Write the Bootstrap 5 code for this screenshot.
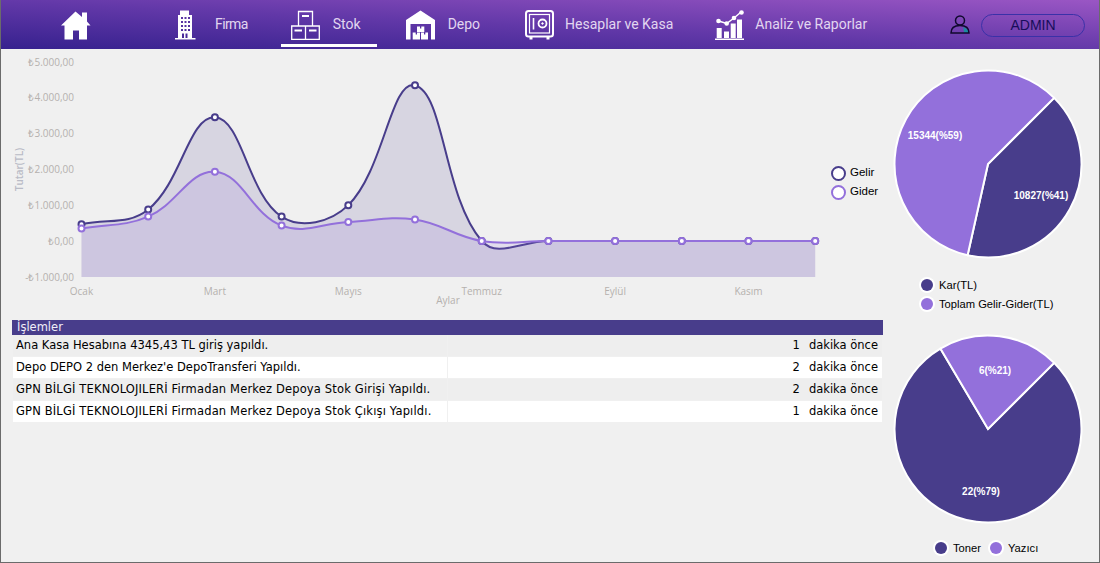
<!DOCTYPE html>
<html>
<head>
  <meta charset="UTF-8">
  <title>Panel</title>
  <link href="https://cdn.jsdelivr.net/npm/bootstrap@5.3.0/dist/css/bootstrap.min.css" rel="stylesheet">
  <style>
    html, body { height: 563px; overflow: hidden; }
    body { background: #f0f0f0; font-family: "Liberation Sans", Arial, sans-serif; font-size: 11.2px; color: #000; }
    .app-frame { height: 563px; border: 1px solid #6b6b6b; border-top: 0; display: flex; flex-direction: column; }
    .top-bar { height: 49px; background: linear-gradient(to top right, #36218e 0%, #6238a8 48%, #9a56c4 100%); flex: none; padding-left: 50px; }
    .top-link { height: 47px; align-self: flex-start; display: flex; align-items: center; gap: 13px; padding: 4px 16px 0 10px; color: #e2d6f0; font-family: Roboto, sans-serif; font-size: 14px; text-decoration: none; border-bottom: 3px solid transparent; }
    .top-link:hover { color: #e2d6f0; }
    .top-link.is-on { border-bottom-color: #fff; }
    .top-link svg { display: block; margin-top: 1px; }
    .link-firma { margin-left: 54px; gap: 15px; letter-spacing: -.6px; }
    .link-stok { margin-left: 17px; }
    .link-depo, .link-kasa { margin-left: 19px; }
    .link-kasa, .link-rapor { gap: 11px; }
    .link-rapor { margin-left: 16px; }
    .user-pill { width: 104px; height: 23px; margin: 1px 14px 0 11px; border: 1px solid #3a31a8; border-radius: 12px; color: #170d5a; font-size: 14px; line-height: 21px; text-align: center; }
    .main-col { width: 884px; flex: none; }
    .side-col { width: 214px; flex: none; }
    .chart-wrap { height: 271px; }
    .chart-key { margin: 114.5px 0 0 3px; font-size: 11.5px; }
    .chart-key > div { height: 19px; }
    .log-table { width: 871px; margin: 0 0 0 11px; border-collapse: separate; border-spacing: 1px; font-family: "DejaVu Sans", Verdana, sans-serif; font-size: 11.5px; table-layout: fixed; }
    .log-table th { background: #483d8b; color: #f0eef8; font-weight: 400; height: 13px; line-height: 13px; padding: 0 4px; box-shadow: 0 0 0 1px #483d8b; }
    .log-table td { height: 21px; padding: 0 4px 0 3px; background: #eeeeee; vertical-align: middle; white-space: nowrap; }
    .log-table tr:nth-child(even) td { background: #fff; }
    .log-wide { letter-spacing: .16px; }
    .log-num { display: inline-block; margin-right: 9px; }
    .pie-label { font: 700 10px "Liberation Sans", Arial, sans-serif; fill: #fff; text-anchor: middle; }
    .axis-text { font: 10px "Open Sans", sans-serif; fill: #b5b1ae; }
    .axis-title { font-weight: 600; fill: #b9bbc6; }
    .pie-svg { display: block; margin-left: 5px; }
    .pie-top { margin-top: 17px; }
    .pie-bottom { margin-top: 17px; }
    .pie-key { margin: 13.5px 0 0 36px; }
    .pie-key > div { height: 19px; gap: 6px; }
    .pie-key-row { margin: 12px 0 0 50px; height: 19px; gap: 6px; }
    .dot-key { width: 12px; height: 12px; border-radius: 50%; flex: none; box-shadow: 0 0 0 2px #fff; }
    .dot-dark { background: #483d8b; }
    .dot-light { background: #9370db; }
    .dot-next { margin-left: 3px; }
    .ring-key { width: 15px; height: 15px; border-radius: 50%; background: #fff; border: 2px solid #483d8b; flex: none; }
    .ring-light { border-color: #9370db; }
  </style>
</head>
<body>
<div class="app-frame">
  <nav class="top-bar d-flex align-items-center">
    <a class="top-link" href="#">
      <svg width="30" height="30" viewBox="0 -1.500 30 30" fill="#fff"><path d="M14.500 0 21 5.500V1h5v9l3.500 4H26v14h-8v-9h-6v9H3.500V14H0z"/></svg>
    </a>
    <a class="top-link link-firma" href="#">
      <svg width="29" height="30" viewBox="0 0 29 30" fill="#fff"><path fill-rule="evenodd" d="M7 28V5h2V.5h9V5h3v23h3.500v1.500H4V28zM10 7v2h2V7zm3.500 0v2h2V7zM17 7v2h2V7zm-7 4v2h2v-2zm3.500 0v2h2v-2zm3.500 0v2h2v-2zm-7 4v2h2v-2zm3.500 0v2h2v-2zm3.500 0v2h2v-2zm-7 4v2h2v-2zm3.500 0v2h2v-2zm3.500 0v2h2v-2zm-6 4.500V28h2v-4.500zm3.500 0V28h2v-4.500z"/></svg>
      Firma
    </a>
    <a class="top-link link-stok is-on" href="#">
      <svg width="29" height="30" viewBox="0 0 29 30" fill="none" stroke="#fff" stroke-width="1.300"><path d="M7.500 1.500h14V16h-14zM.7 16h13.800v13.300H.7zM14.500 16h13.800v13.300H14.500z"/><path d="M11 6h7M3.500 20.500h7.500M18 20.500h7.500" stroke-width="1.800"/></svg>
      Stok
    </a>
    <a class="top-link link-depo" href="#">
      <svg width="29" height="30" viewBox="0 0 29 30" fill="#fff"><path fill-rule="evenodd" d="M14.500.5 29 10v19.500h-4V14H4.500v15.500H0V10z"/><path d="M11 16.500h3v2h1.300v-2h3v5.500H11zM6.700 22.500h3v2H11v-2h3v7H6.700zM15 22.500h3v2h1.300v-2H22v7h-7z"/></svg>
      Depo
    </a>
    <a class="top-link link-kasa" href="#">
      <svg width="29" height="30" viewBox="0 0 29 30" fill="none" stroke="#fff"><rect x="1" y="1" width="27" height="25.500" rx="2.500" stroke-width="2"/><rect x="4.500" y="4.500" width="20" height="18.500" stroke-width="1.200"/><path d="M8.500 8v11.500" stroke-width="1.600"/><circle cx="17.500" cy="13.500" r="4" stroke-width="1.800"/><circle cx="17.500" cy="13.500" r=".8" fill="#fff"/><path d="M6 27v2.500M23 27v2.500" stroke-width="3"/></svg>
      Hesaplar ve Kasa
    </a>
    <a class="top-link link-rapor" href="#">
      <svg width="29" height="30" viewBox="0 0 29 30" fill="#fff"><path d="M0 28.500h29V30H0zM1.700 18h5v10h-5zM9 21.500h5V28H9zM15.700 13.500h5V28h-5zM22 9.500h5V28h-5z"/><path d="M3.500 11l8.200 2.500L19 8l7.700-6.500" fill="none" stroke="#fff" stroke-width="1.500"/><circle cx="3.500" cy="11" r="2.300"/><circle cx="11.700" cy="13.500" r="2.300"/><circle cx="19" cy="8" r="2.300"/><circle cx="26.500" cy="2.500" r="2.300"/></svg>
      Analiz ve Raporlar
    </a>
    <svg class="ms-auto" width="20" height="19" viewBox="0 0 20 19" fill="none" stroke="#10092e" stroke-width="1.500"><path d="M13 12c3.500 1 5.500 3 6 6h-5c0-2-.2-4-1-6z" fill="#1c8aa0" stroke="none"/><circle cx="10" cy="5.500" r="4.500"/><path d="M1 18c0-5 3.500-7.500 9-7.500s9 2.500 9 7.500z"/></svg>
    <div class="user-pill">ADMIN</div>
  </nav>

  <div class="d-flex flex-grow-1">
    <div class="main-col">
      <div class="chart-wrap d-flex">
        <svg id="line-chart" width="827" height="271" viewBox="1 49 827 271"></svg>
        <div class="chart-key">
          <div class="d-flex align-items-center gap-1"><span class="ring-key"></span>Gelir</div>
          <div class="d-flex align-items-center gap-1"><span class="ring-key ring-light"></span>Gider</div>
        </div>
      </div>
      <table class="log-table">
        <colgroup><col><col></colgroup>
        <thead><tr><th colspan="2">İşlemler</th></tr></thead>
        <tbody id="log-rows"></tbody>
      </table>
    </div>

    <div class="side-col">
      <svg id="pie-a" class="pie-svg pie-top" width="196" height="196" viewBox="-98 -98 196 196"></svg>
      <div class="pie-key">
        <div class="d-flex align-items-center"><span class="dot-key dot-dark"></span>Kar(TL)</div>
        <div class="d-flex align-items-center"><span class="dot-key dot-light"></span>Toplam Gelir-Gider(TL)</div>
      </div>
      <svg id="pie-b" class="pie-svg pie-bottom" width="196" height="196" viewBox="-98 -98 196 196"></svg>
      <div class="pie-key-row d-flex align-items-center">
        <span class="dot-key dot-dark"></span>Toner
        <span class="dot-key dot-light dot-next"></span>Yazıcı
      </div>
    </div>
  </div>
</div>

<script src="https://cdn.jsdelivr.net/npm/bootstrap@5.3.0/dist/js/bootstrap.bundle.min.js"></script>
<script>
  // islemler tablosu
  const logs = [
    ['Ana Kasa Hesabına 4345,43 TL giriş yapıldı.', 1, ''],
    ["Depo DEPO 2 den Merkez'e DepoTransferi Yapıldı.", 2, ''],
    ['GPN BİLGİ TEKNOLOJILERİ Firmadan Merkez Depoya Stok Girişi Yapıldı.', 2, 'log-wide'],
    ['GPN BİLGİ TEKNOLOJILERİ Firmadan Merkez Depoya Stok Çıkışı Yapıldı.', 1, 'log-wide']
  ];
  document.getElementById('log-rows').innerHTML = logs.map(l =>
    `<tr><td class="${l[2]}">${l[0]}</td><td class="text-end"><span class="log-num">${l[1]}</span>dakika önce</td></tr>`).join('');

  // cizgi grafik
  const SVG_X0 = 81.5, STEP = 66.7, Y0 = 241, UNIT = 35.85;
  const gelir = [470, 880, 3450, 680, 1000, 4345, 0, 0, 0, 0, 0, 0];
  const gider = [350, 680, 1930, 430, 530, 600, 0, 0, 0, 0, 0, 0];
  const toXY = arr => arr.map((v, i) => [SVG_X0 + i * STEP, Y0 - v / 1000 * UNIT]);

  // chart.js tension mantigi
  function spline(pts) {
    const t = 0.4;
    let d = `M${pts[0][0]} ${pts[0][1]}`;
    const ctrl = pts.map((p, i) => {
      const a = pts[Math.max(i - 1, 0)], b = pts[Math.min(i + 1, pts.length - 1)];
      const d1 = Math.hypot(p[0] - a[0], p[1] - a[1]), d2 = Math.hypot(b[0] - p[0], b[1] - p[1]);
      const s = d1 + d2 ? d1 / (d1 + d2) : 0, f = 1 - s;
      return {
        prev: [p[0] - t * s * (b[0] - a[0]), p[1] - t * s * (b[1] - a[1])],
        next: [p[0] + t * f * (b[0] - a[0]), p[1] + t * f * (b[1] - a[1])]
      };
    });
    for (let i = 1; i < pts.length; i++) {
      d += `C${ctrl[i - 1].next[0]} ${ctrl[i - 1].next[1]} ${ctrl[i].prev[0]} ${ctrl[i].prev[1]} ${pts[i][0]} ${pts[i][1]}`;
    }
    return d;
  }

  function series(arr, color) {
    const pts = toXY(arr), line = spline(pts);
    const last = pts[pts.length - 1][0];
    let s = `<path d="${line}L${last} 277L${SVG_X0} 277Z" fill="${color}" fill-opacity=".15"/>`;
    s += `<path d="${line}" fill="none" stroke="${color}" stroke-width="2"/>`;
    s += pts.map(p => `<circle cx="${p[0]}" cy="${p[1]}" r="3" fill="#fff" stroke="${color}" stroke-width="2"/>`).join('');
    return s;
  }

  let chart = '';
  ['₺5.000,00', '₺4.000,00', '₺3.000,00', '₺2.000,00', '₺1.000,00', '₺0,00', '-₺1.000,00'].forEach((t, i) => {
    chart += `<text class="axis-text" x="74" y="${65.500 + i * 35.85}" text-anchor="end">${t}</text>`;
  });
  ['Ocak', 'Mart', 'Mayıs', 'Temmuz', 'Eylül', 'Kasım'].forEach((t, i) => {
    chart += `<text class="axis-text" x="${SVG_X0 + i * 2 * STEP}" y="295" text-anchor="middle">${t}</text>`;
  });
  chart += `<text class="axis-text" x="448" y="304" text-anchor="middle">Aylar</text>`;
  chart += `<text class="axis-text axis-title" transform="translate(23 169.500) rotate(-90)" text-anchor="middle">Tutar(TL)</text>`;
  chart += series(gelir, '#483d8b') + series(gider, '#9370db');
  document.getElementById('line-chart').innerHTML = chart;

  // pastalar, 45 dereceden baslar
  function pie(id, parts) {
    const R = 93.5;
    const pos = (deg, r) => [Math.sin(deg * Math.PI / 180) * r, -Math.cos(deg * Math.PI / 180) * r];
    let a = 45, out = '';
    parts.forEach(p => {
      const b = a + p.v / 100 * 360, s = pos(a, R), e = pos(b, R);
      out += `<path d="M0 0L${s[0]} ${s[1]}A${R} ${R} 0 ${b - a > 180 ? 1 : 0} 1 ${e[0]} ${e[1]}Z" fill="${p.c}" stroke="#fff" stroke-width="2"/>`;
      a = b;
    });
    parts.forEach(p => {
      out += `<text class="pie-label" x="${p.x}" y="${p.y}">${p.t}</text>`;
    });
    document.getElementById(id).innerHTML = out;
  }
  pie('pie-a', [
    { v: 41, c: '#483d8b', t: '10827(%41)', x: 53, y: 35 },
    { v: 59, c: '#9370db', t: '15344(%59)', x: -53, y: -25 }
  ]);
  pie('pie-b', [
    { v: 79, c: '#483d8b', t: '22(%79)', x: -7, y: 65.5 },
    { v: 21, c: '#9370db', t: '6(%21)', x: 7, y: -55 }
  ]);
</script>
</body>
</html>
